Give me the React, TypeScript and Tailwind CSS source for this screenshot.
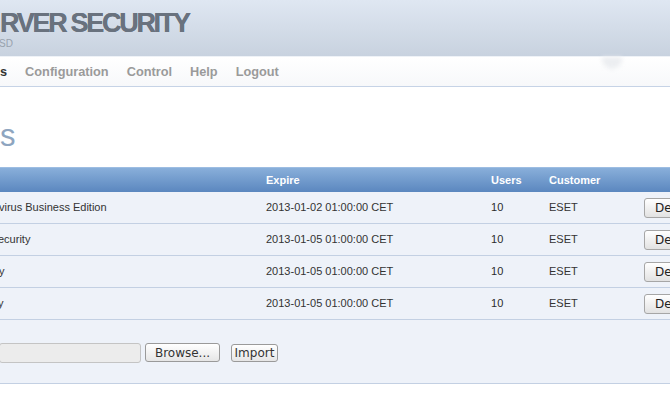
import React from "react";

const rows = [
  { name: "virus Business Edition", nameOffset: "-ml-[1px]", expire: "2013-01-02 01:00:00 CET" },
  { name: "ecurity", nameOffset: "-ml-[2px]", expire: "2013-01-05 01:00:00 CET" },
  { name: "y", nameOffset: "-ml-[1px]", expire: "2013-01-05 01:00:00 CET" },
  { name: "y", nameOffset: "-ml-[2px]", expire: "2013-01-05 01:00:00 CET" },
];

export default function App() {
  return (
    <div className="w-[670px] h-[400px] overflow-hidden bg-white antialiased font-['Liberation_Sans',Arial,sans-serif]">
      {/* Header */}
      <div className="h-[56px] bg-gradient-to-b from-[#dfe7f2] to-[#c8d2df] pt-[10px]">
        <div className="text-[27px] leading-none font-bold tracking-[-0.085em] text-[#69727e] whitespace-nowrap [text-shadow:0_0_0.6px_#69727e]">
          RVER SECURITY
        </div>
        <div className="mt-[2px] -ml-[1px] text-[10px] leading-none text-[#98a2ae] whitespace-nowrap">SD</div>
      </div>
      {/* Nav */}
      <div className="relative h-[31px] border-t border-[#eef2f7] border-b border-b-[#c6d3e6] bg-gradient-to-b from-white to-[#f7f8fa] flex items-center gap-[18px] pt-[1px] text-[12.75px] font-bold text-[#9a9a9a] whitespace-nowrap">
        <span className="text-[#333]">s</span>
        <span>Configuration</span>
        <span>Control</span>
        <span>Help</span>
        <span>Logout</span>
        <div className="absolute left-[602px] top-0 w-[20px] h-[12px] rounded-b-full bg-[#eceef1] blur-[2px]" />
      </div>
      {/* Heading */}
      <div className="h-[80px] pt-[33px]">
        <div className="text-[31px] leading-none text-[#8ea5c0] whitespace-nowrap">s</div>
      </div>
      {/* Table */}
      <div className="bg-[#eef2f9] border-b border-[#c3d0e3]">
        <div className="h-[25px] border-t border-[#9dbde2] bg-gradient-to-b from-[#89afda] to-[#5b87bf] grid grid-cols-[266px_225px_58px_94px_1fr] items-center text-[11px] font-bold text-white">
          <div />
          <div>Expire</div>
          <div>Users</div>
          <div>Customer</div>
          <div />
        </div>
        {rows.map((r, i) => (
          <div
            key={i}
            className="h-[32px] border-b border-[#c3d0e3] grid grid-cols-[266px_225px_58px_94px_1fr] items-center text-[11px] text-[#333333] whitespace-nowrap"
          >
            <div className={r.nameOffset}>{r.name}</div>
            <div>{r.expire}</div>
            <div className="text-[#2b2b2b] tracking-[0.2px]">10</div>
            <div>ESET</div>
            <div className="pl-[1px]">
              <button className="h-[20px] w-[60px] rounded-[3px] border border-[#a6a6a6] bg-gradient-to-b from-white to-[#e2e2e2] text-left pl-[10px] text-[12px] text-[#222] font-['DejaVu_Sans',sans-serif]">
                Delete
              </button>
            </div>
          </div>
        ))}
        <div className="h-[63px] flex items-start pt-[23px] gap-[4px] font-['DejaVu_Sans',sans-serif] text-[12px] text-[#333]">
          <div className="w-[142px] h-[20px] -ml-[1px] rounded-[3px] border border-[#c4c4c4] bg-[#ececec]" />
          <button className="w-[75px] h-[19px] rounded-[3px] border border-[#9a9a9a] bg-gradient-to-b from-white to-[#e6e6e6] leading-none">
            Browse...
          </button>
          <button className="ml-[7px] mt-[1px] w-[47px] h-[18px] rounded-[3px] border border-[#9a9a9a] bg-gradient-to-b from-white to-[#e6e6e6] leading-none">
            Import
          </button>
        </div>
      </div>
    </div>
  );
}
